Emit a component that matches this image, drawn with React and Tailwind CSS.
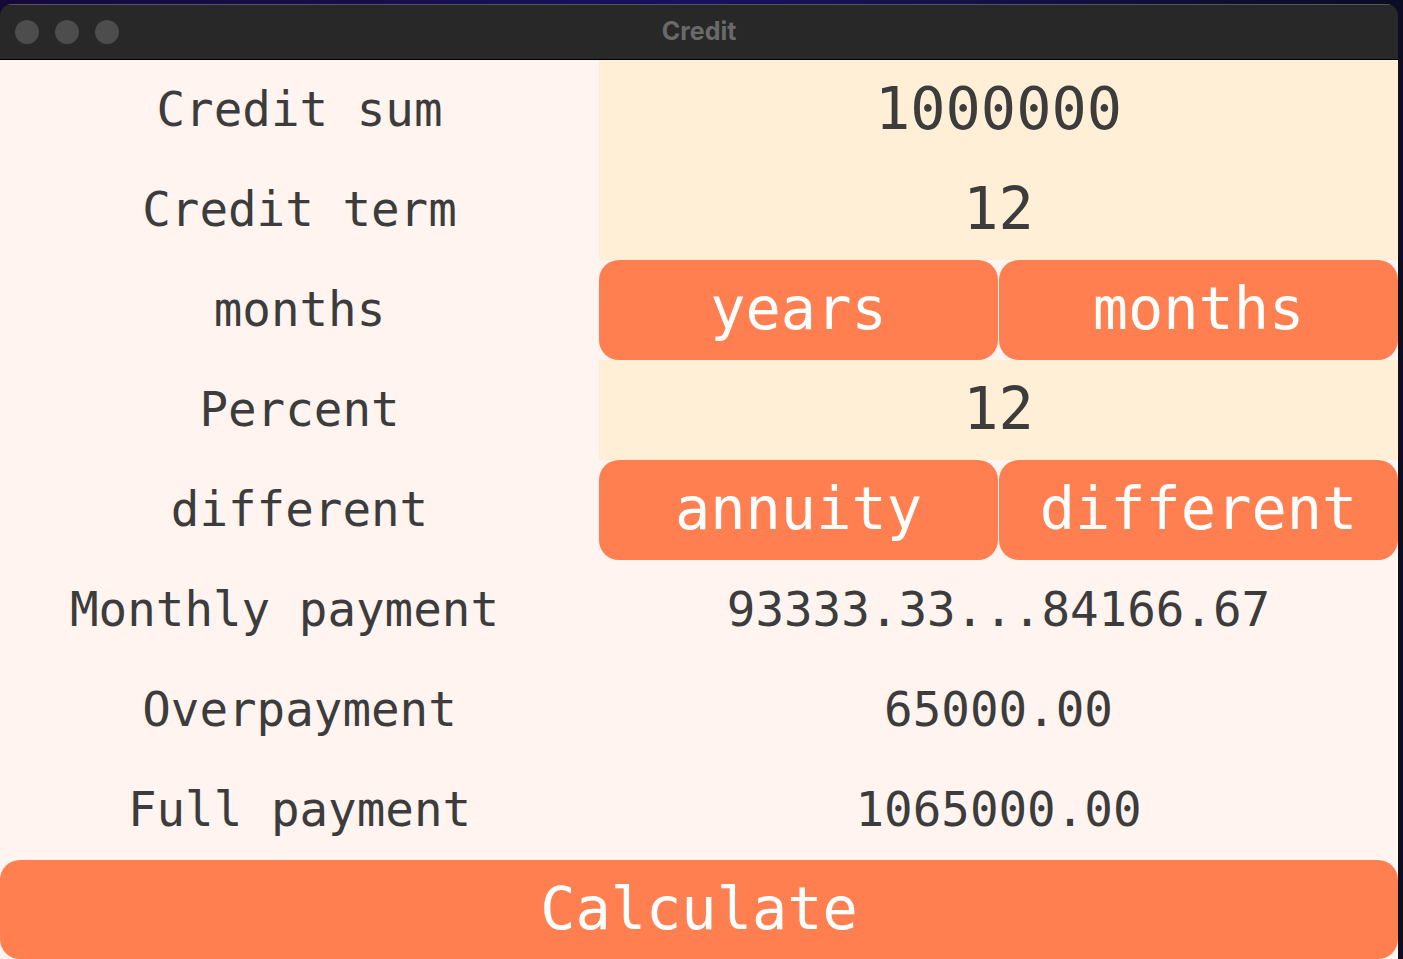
import React from "react";

const mono = { fontFamily: '"DejaVu Sans Mono", "Liberation Mono", monospace' };

function Label({ children, extra = "" }) {
  return (
    <div className={"h-[100px] flex items-center justify-center text-[47.5px] text-[#3c3c3c] bg-[#fff4ef] " + extra} style={mono}>
      {children}
    </div>
  );
}

function Input({ children }) {
  return (
    <div className="h-[100px] flex items-center justify-center text-[58.6px] text-[#3c3c3c] bg-[#ffefd7]" style={mono}>
      {children}
    </div>
  );
}

function Toggle({ a, b }) {
  return (
    <div className="h-[100px] flex bg-[#fff4ef]" style={mono}>
      <div className="flex-1 flex items-center justify-center rounded-[20px] bg-[#ff7f50] text-white text-[58.6px]">{a}</div>
      <div className="w-px" />
      <div className="flex-1 flex items-center justify-center rounded-[20px] bg-[#ff7f50] text-white text-[58.6px]">{b}</div>
    </div>
  );
}

function Value({ children }) {
  return (
    <div className="h-[100px] flex items-center justify-center text-[47.5px] text-[#3c3c3c] bg-[#fff4ef]" style={mono}>
      {children}
    </div>
  );
}

export default function App() {
  return (
    <div className="w-[1403px] h-[959px] overflow-hidden bg-gradient-to-r from-[#140a3a] via-[#1a1060] to-[#0c0c24] flex flex-col">
      <div className="h-[4px] shrink-0" />
      <div className="w-[1399px] flex-1 flex flex-col rounded-t-[12px] overflow-hidden border-r border-[#111]">
        <div className="h-[56px] shrink-0 bg-[#282828] border-t border-[#555] border-b border-b-black relative flex items-center">
          <div className="flex gap-[16px] pl-[15px]">
            <div className="w-[24px] h-[24px] rounded-full bg-[#4d4d4d]" />
            <div className="w-[24px] h-[24px] rounded-full bg-[#4d4d4d]" />
            <div className="w-[24px] h-[24px] rounded-full bg-[#4d4d4d]" />
          </div>
          <div className="absolute inset-0 flex items-center justify-center text-[25px] font-bold text-[#6a6a6a]" style={{ fontFamily: '"Inter", "Liberation Sans", sans-serif' }}>
            Credit
          </div>
        </div>
        <div className="grid grid-cols-[599px_1fr] bg-[#fff4ef]">
          <Label>Credit sum</Label>
          <Input>1000000</Input>
          <Label>Credit term</Label>
          <Input>12</Input>
          <Label>months</Label>
          <Toggle a="years" b="months" />
          <Label>Percent</Label>
          <Input>12</Input>
          <Label>different</Label>
          <Toggle a="annuity" b="different" />
          <Label extra="pr-[30px]">Monthly payment</Label>
          <Value>93333.33...84166.67</Value>
          <Label>Overpayment</Label>
          <Value>65000.00</Value>
          <Label>Full payment</Label>
          <Value>1065000.00</Value>
        </div>
        <div className="bg-[#fff4ef] flex-1 flex">
          <div className="flex-1 rounded-[20px] bg-[#ff7f50] text-white text-[58.6px] flex items-center justify-center" style={mono}>
            Calculate
          </div>
        </div>
      </div>
    </div>
  );
}
